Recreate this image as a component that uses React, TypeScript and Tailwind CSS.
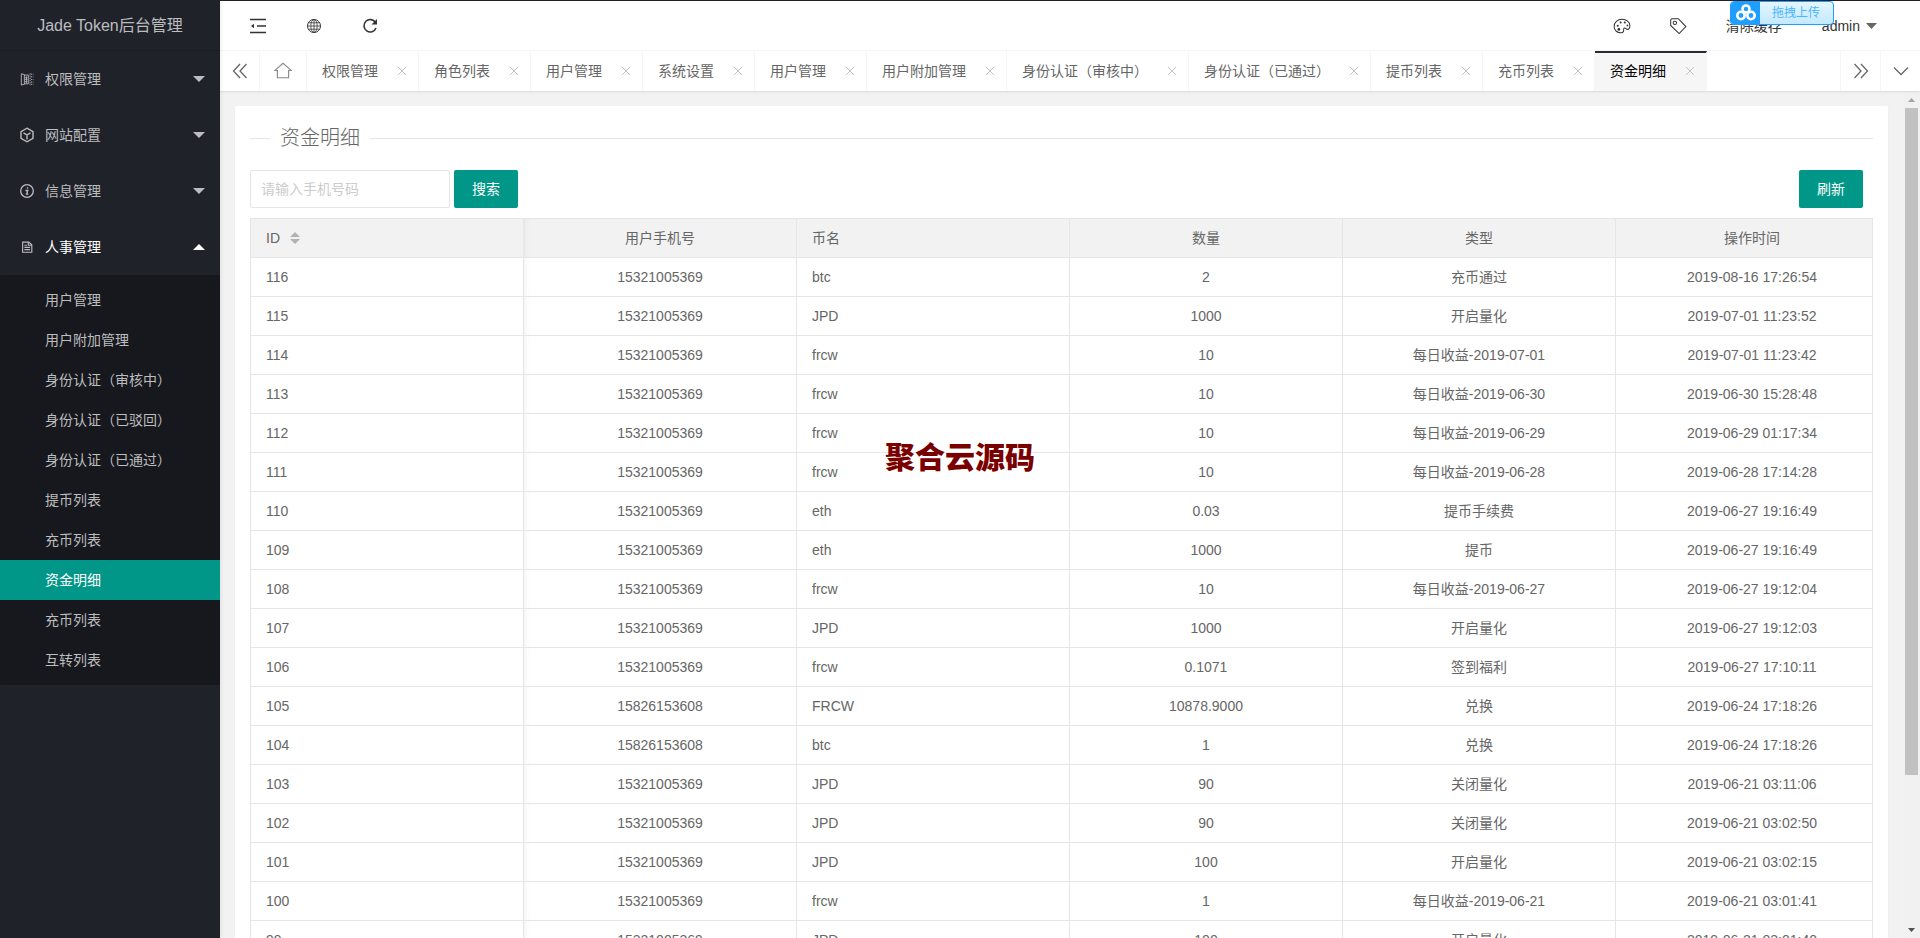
import type { ReactNode } from "react";

const menus = [
  { name: "权限管理", icon: "book", open: false },
  { name: "网站配置", icon: "cube", open: false },
  { name: "信息管理", icon: "info", open: false },
  { name: "人事管理", icon: "file", open: true },
];

const subMenus = [
  "用户管理",
  "用户附加管理",
  "身份认证（审核中）",
  "身份认证（已驳回）",
  "身份认证（已通过）",
  "提币列表",
  "充币列表",
  "资金明细",
  "充币列表",
  "互转列表",
];
const activeSub = 7;

const tabs = [
  "权限管理",
  "角色列表",
  "用户管理",
  "系统设置",
  "用户管理",
  "用户附加管理",
  "身份认证（审核中）",
  "身份认证（已通过）",
  "提币列表",
  "充币列表",
  "资金明细",
];
const activeTab = 10;

const rows = [
  ["116", "15321005369", "btc", "2", "充币通过", "2019-08-16 17:26:54"],
  ["115", "15321005369", "JPD", "1000", "开启量化", "2019-07-01 11:23:52"],
  ["114", "15321005369", "frcw", "10", "每日收益-2019-07-01", "2019-07-01 11:23:42"],
  ["113", "15321005369", "frcw", "10", "每日收益-2019-06-30", "2019-06-30 15:28:48"],
  ["112", "15321005369", "frcw", "10", "每日收益-2019-06-29", "2019-06-29 01:17:34"],
  ["111", "15321005369", "frcw", "10", "每日收益-2019-06-28", "2019-06-28 17:14:28"],
  ["110", "15321005369", "eth", "0.03", "提币手续费", "2019-06-27 19:16:49"],
  ["109", "15321005369", "eth", "1000", "提币", "2019-06-27 19:16:49"],
  ["108", "15321005369", "frcw", "10", "每日收益-2019-06-27", "2019-06-27 19:12:04"],
  ["107", "15321005369", "JPD", "1000", "开启量化", "2019-06-27 19:12:03"],
  ["106", "15321005369", "frcw", "0.1071", "签到福利", "2019-06-27 17:10:11"],
  ["105", "15826153608", "FRCW", "10878.9000", "兑换", "2019-06-24 17:18:26"],
  ["104", "15826153608", "btc", "1", "兑换", "2019-06-24 17:18:26"],
  ["103", "15321005369", "JPD", "90", "关闭量化", "2019-06-21 03:11:06"],
  ["102", "15321005369", "JPD", "90", "关闭量化", "2019-06-21 03:02:50"],
  ["101", "15321005369", "JPD", "100", "开启量化", "2019-06-21 03:02:15"],
  ["100", "15321005369", "frcw", "1", "每日收益-2019-06-21", "2019-06-21 03:01:41"],
  ["99", "15321005369", "JPD", "100", "开启量化", "2019-06-21 03:01:40"],
];

const columns = ["ID", "用户手机号", "币名", "数量", "类型", "操作时间"];

// one entry per column, shared by th and td
const cellStyles = [
  "px-[15px] text-left",
  "px-[15px] text-center shadow-[inset_5px_0_6px_-4px_rgba(0,0,0,0.06)]",
  "px-[15px] text-left",
  "px-[15px] text-center",
  "px-[15px] text-center",
  "pr-[15px] pl-[31px] text-center",
];

function Svg({ size, children }: { size: number; children: ReactNode }) {
  return (
    <svg
      width={size}
      height={size}
      viewBox="0 0 16 16"
      fill="none"
      stroke="currentColor"
      strokeWidth="1"
      aria-hidden="true"
    >
      {children}
    </svg>
  );
}

function MenuIcon({ name }: { name: string }) {
  if (name === "book") {
    return (
      <Svg size={14}>
        <path d="M1.500 2l3.500 1v11l-3.500 1zM5 3.500h4.500v10H5M6 6.500h2.500M6 8.500h2.500M6 11h2.500M7.300 5v8" />
        <path d="M11.500 1.500v13.500M12.500 2.500h3M12.500 5.500h3M12.500 8.500h3M12.500 11.500h3M12.500 14h3" strokeDasharray="1.500 1" />
      </Svg>
    );
  }
  if (name === "cube") {
    return (
      <Svg size={16}>
        <path d="M8 1.200l6 3.400v6.800l-6 3.400-6-3.400V4.600zM4.500 5.800L8 8l3.500-2.200M8 8v4.500" strokeWidth="1.400" />
      </Svg>
    );
  }
  if (name === "info") {
    return (
      <Svg size={16}>
        <circle cx="8" cy="8" r="6.300" strokeWidth="1.300" />
        <path d="M8.500 4.200v1.600M6.500 7.500h3M8.200 7v4.500M6.800 11h2.400" strokeWidth="1.300" />
      </Svg>
    );
  }
  return (
    <Svg size={14}>
      <path d="M3 2.500h7l3.500 3v8.500H3zM9.500 2.500V6h4M5 6h3M5 8.500h6.500M5 11h6.500" strokeWidth="1.300" />
    </Svg>
  );
}

function CloseIcon() {
  return (
    <svg width="10" height="10" viewBox="0 0 10 10" fill="none" stroke="#c5c5c5" aria-hidden="true">
      <path d="M1 1l8 8M9 1l-8 8" />
    </svg>
  );
}

function Sidebar() {
  return (
    <aside className="z-20 flex w-[220px] shrink-0 flex-col bg-[#20222a] text-[#bcbdbf] shadow-[1px_0_4px_rgba(0,0,0,0.08)]">
      <h1 className="flex h-[50px] items-center justify-center border-b border-[#1b1d23] text-base">
        Jade Token后台管理
      </h1>
      <nav>
        {menus.map((menu) => (
          <button
            key={menu.name}
            type="button"
            className={
              menu.open
                ? "flex h-14 w-full items-center pr-[15px] pl-[19px] text-white"
                : "flex h-14 w-full items-center pr-[15px] pl-[19px]"
            }
          >
            <span className="mr-2.5 flex w-4 justify-center text-[#bcbdbf]">
              <MenuIcon name={menu.icon} />
            </span>
            <span className="flex-1 text-left">{menu.name}</span>
            <svg width="12" height="6" viewBox="0 0 12 6" fill="currentColor" aria-hidden="true">
              <path d={menu.open ? "M0 6L6 0l6 6z" : "M0 0h12L6 6z"} />
            </svg>
          </button>
        ))}
        <ul className="rounded-xs bg-[#17181d] py-[5px]">
          {subMenus.map((name, i) => (
            <li key={i}>
              <a
                href="#"
                className={
                  i === activeSub
                    ? "block bg-[#009688] pl-[45px] leading-10 text-white"
                    : "block pl-[45px] leading-10"
                }
              >
                {name}
              </a>
            </li>
          ))}
        </ul>
      </nav>
    </aside>
  );
}

function UploadBadge() {
  return (
    <div className="absolute top-0 right-[86px] flex h-6 w-[104px] overflow-hidden rounded-sm border border-[#1e9fff] bg-linear-to-b from-[#e4f6ff] to-[#c3e9ff]">
      <span className="flex w-[29px] items-center justify-center bg-[#1e9fff]">
        <svg width="20" height="18" viewBox="0 0 20 18" fill="none" stroke="#fff" strokeWidth="2.600" aria-hidden="true">
          <circle cx="10" cy="5" r="3.500" />
          <circle cx="5" cy="11.500" r="3.700" />
          <circle cx="15" cy="11.500" r="3.700" />
        </svg>
      </span>
      <span className="flex-1 pr-px text-center text-xs leading-[22px] text-[#4db5ff]">拖拽上传</span>
    </div>
  );
}

function Header() {
  return (
    <header className="relative flex h-[50px] items-center border-b border-[#f6f6f6] bg-white px-[10px] text-[#333]">
      <button type="button" aria-label="侧边伸缩" className="flex w-14 justify-center">
        <Svg size={16}>
          <path d="M0 1.500h16M7 8h9M0 14.500h16" strokeWidth="1.500" />
          <path d="M1 8l3-2.200v4.400z" fill="currentColor" stroke="none" />
        </Svg>
      </button>
      <button type="button" aria-label="前台" className="flex w-14 justify-center">
        <Svg size={16}>
          <circle cx="8" cy="8" r="6.500" />
          <ellipse cx="8" cy="8" rx="3.200" ry="6.500" strokeWidth="0.800" />
          <path d="M8 1.500v13M1.500 8h13M2.500 4.800h11M2.500 11.200h11" strokeWidth="0.800" />
        </Svg>
      </button>
      <button type="button" aria-label="刷新" className="flex w-14 justify-center">
        <Svg size={16}>
          <path d="M13.500 4.500A6.200 6.200 0 1 0 14 10" strokeWidth="1.600" />
          <path d="M15 1v5.500H9.500z" fill="currentColor" stroke="none" />
        </Svg>
      </button>
      <div className="ml-auto flex items-center">
        <button type="button" aria-label="主题" className="flex w-14 justify-center">
          <Svg size={18}>
            <path
              d="M7.500 14C3.800 14.300 1 12 1 8.500 1 4.800 4 2 8 2c4 0 7 2.400 7 5.500 0 2-1 3.500-2.200 3.500-1.100 0-1.400-1.500-2.600-1.300-1.500.3-.4 2-.8 3-.3.800-1 1.200-1.900 1.300z"
              strokeWidth="0.900"
            />
            <g fill="currentColor" stroke="none">
              <circle cx="4.200" cy="7.800" r="0.900" />
              <circle cx="6.800" cy="4.800" r="0.900" />
              <circle cx="10.500" cy="4.800" r="0.900" />
              <circle cx="12.800" cy="7.500" r="0.800" />
              <circle cx="5.200" cy="11" r="1.200" />
            </g>
          </Svg>
        </button>
        <button type="button" aria-label="便签" className="flex w-14 justify-center">
          <Svg size={18}>
            <path d="M1.500 2.500L2.500 1.500h5.800L15 8.500l-6 6.200L1.500 7.500z" strokeWidth="0.900" />
            <circle cx="5.200" cy="5.200" r="1.500" strokeWidth="0.900" />
          </Svg>
        </button>
        <button type="button" className="px-5">清除缓存</button>
        <button type="button" className="flex items-center gap-1.5 pr-[33px] pl-5">
          admin
          <svg width="11" height="6" viewBox="0 0 11 6" fill="#666" aria-hidden="true">
            <path d="M0 0h11L5.500 6z" />
          </svg>
        </button>
      </div>
      <UploadBadge />
    </header>
  );
}

function TabBar() {
  return (
    <div className="relative z-10 flex h-10 bg-white text-[#666] shadow-[0_1px_2px_rgba(0,0,0,0.1)]">
      <button type="button" aria-label="向左" className="flex w-10 items-center justify-center border-r border-[#f6f6f6]">
        <Svg size={16}>
          <path d="M8 1L1.500 8 8 15M14.500 1L8 8l6.500 7" strokeWidth="1.300" />
        </Svg>
      </button>
      <ul className="flex min-w-0 flex-1 overflow-hidden">
        <li className="flex w-[47px] items-center justify-center border-r border-[#f6f6f6] text-[#888]">
          <Svg size={18}>
            <path d="M.800 7.500L8 1.200l7.200 6.300H13V14H3V7.500z" />
          </Svg>
        </li>
        {tabs.map((name, i) => (
          <li
            key={i}
            className={
              i === activeTab
                ? "flex shrink-0 items-center gap-[19px] border-t-2 border-r border-t-[#292b34] border-r-[#f6f6f6] bg-[#f6f6f6] pr-[11px] pb-0.5 pl-[15px] text-black"
                : "flex shrink-0 items-center gap-[19px] border-r border-[#f6f6f6] pr-[11px] pl-[15px]"
            }
          >
            <span>{name}</span>
            <button type="button" aria-label="关闭">
              <CloseIcon />
            </button>
          </li>
        ))}
      </ul>
      <button type="button" aria-label="向右" className="flex w-10 items-center justify-center border-l border-[#f6f6f6]">
        <Svg size={16}>
          <path d="M1.500 1L8 8l-6.500 7M8 1l6.500 7L8 15" strokeWidth="1.300" />
        </Svg>
      </button>
      <button type="button" aria-label="更多" className="flex w-10 items-center justify-center border-l border-[#f6f6f6]">
        <Svg size={16}>
          <path d="M1 4.500l7 7 7-7" strokeWidth="1.300" />
        </Svg>
      </button>
    </div>
  );
}

function FundTable() {
  return (
    <table className="mt-2.5 w-full table-fixed border-collapse border border-[#e6e6e6]">
      <colgroup>
        <col className="w-[273px]" />
        <col className="w-[273px]" />
        <col className="w-[273px]" />
        <col className="w-[273px]" />
        <col className="w-[273px]" />
        <col />
      </colgroup>
      <thead>
        <tr className="bg-[#f2f2f2]">
          {columns.map((name, i) => (
            <th key={name} className={`h-[39px] border border-[#e6e6e6] font-normal ${cellStyles[i]}`}>
              {i === 0 ? (
                <span className="flex items-center gap-2.5">
                  {name}
                  <svg width="10" height="12" viewBox="0 0 10 12" fill="#b2b2b2" aria-hidden="true">
                    <path d="M0 5l5-5 5 5zM0 7h10l-5 5z" />
                  </svg>
                </span>
              ) : (
                name
              )}
            </th>
          ))}
        </tr>
      </thead>
      <tbody>
        {rows.map((row) => (
          <tr key={row[0]}>
            {row.map((cell, i) => (
              <td key={i} className={`h-[39px] border border-[#e6e6e6] ${cellStyles[i]}`}>
                {cell}
              </td>
            ))}
          </tr>
        ))}
      </tbody>
    </table>
  );
}

function ScrollTrack() {
  return (
    <div className="flex w-[17px] shrink-0 flex-col items-center bg-[#f1f1f1]">
      <span className="flex h-[17px] items-center">
        <svg width="7" height="4" viewBox="0 0 7 4" fill="#a3a3a3" aria-hidden="true">
          <path d="M0 4L3.500 0 7 4z" />
        </svg>
      </span>
      <div className="w-full flex-1 px-0.5">
        <div className="h-[82%] bg-[#c1c1c1]" />
      </div>
      <span className="flex h-[17px] items-center">
        <svg width="7" height="4" viewBox="0 0 7 4" fill="#505050" aria-hidden="true">
          <path d="M0 0h7L3.500 4z" />
        </svg>
      </span>
    </div>
  );
}

export default function App() {
  return (
    <div className="relative flex h-screen overflow-hidden border-t border-[#222] bg-[#f2f2f2] font-['Liberation_Sans','Noto_Sans_CJK_SC',sans-serif] text-sm text-[#666]">
      <Sidebar />
      <div className="flex min-w-0 flex-1 flex-col">
        <Header />
        <TabBar />
        <div className="flex min-h-0 flex-1">
          <main className="min-w-0 flex-1 overflow-hidden p-[15px]">
            <section className="rounded-xs bg-white px-[15px] pt-[15px] pb-[15px] shadow-[0_1px_2px_rgba(0,0,0,0.05)]">
              <div className="flex items-center gap-2.5">
                <span className="h-px w-5 bg-[#e6e6e6]" />
                <h2 className="text-xl leading-[34px] font-light">资金明细</h2>
                <span className="h-px flex-1 bg-[#e6e6e6]" />
              </div>
              <form className="mt-[15px] flex items-center gap-1 pr-2.5">
                <input
                  type="text"
                  aria-label="手机号码"
                  placeholder="请输入手机号码"
                  className="h-[38px] w-[200px] rounded-xs border border-[#e6e6e6] px-2.5 placeholder:text-[#ccc]"
                />
                <button type="button" className="h-[38px] rounded-xs bg-[#009688] px-[18px] text-white">
                  搜索
                </button>
                <button type="button" className="ml-auto h-[38px] rounded-xs bg-[#009688] px-[18px] text-white">
                  刷新
                </button>
              </form>
              <FundTable />
            </section>
          </main>
          <ScrollTrack />
        </div>
      </div>
      <div className="pointer-events-none absolute inset-0 z-20 flex items-center justify-center pb-6 text-3xl leading-9 font-black text-[#7a0000]">
        聚合云源码
      </div>
    </div>
  );
}
